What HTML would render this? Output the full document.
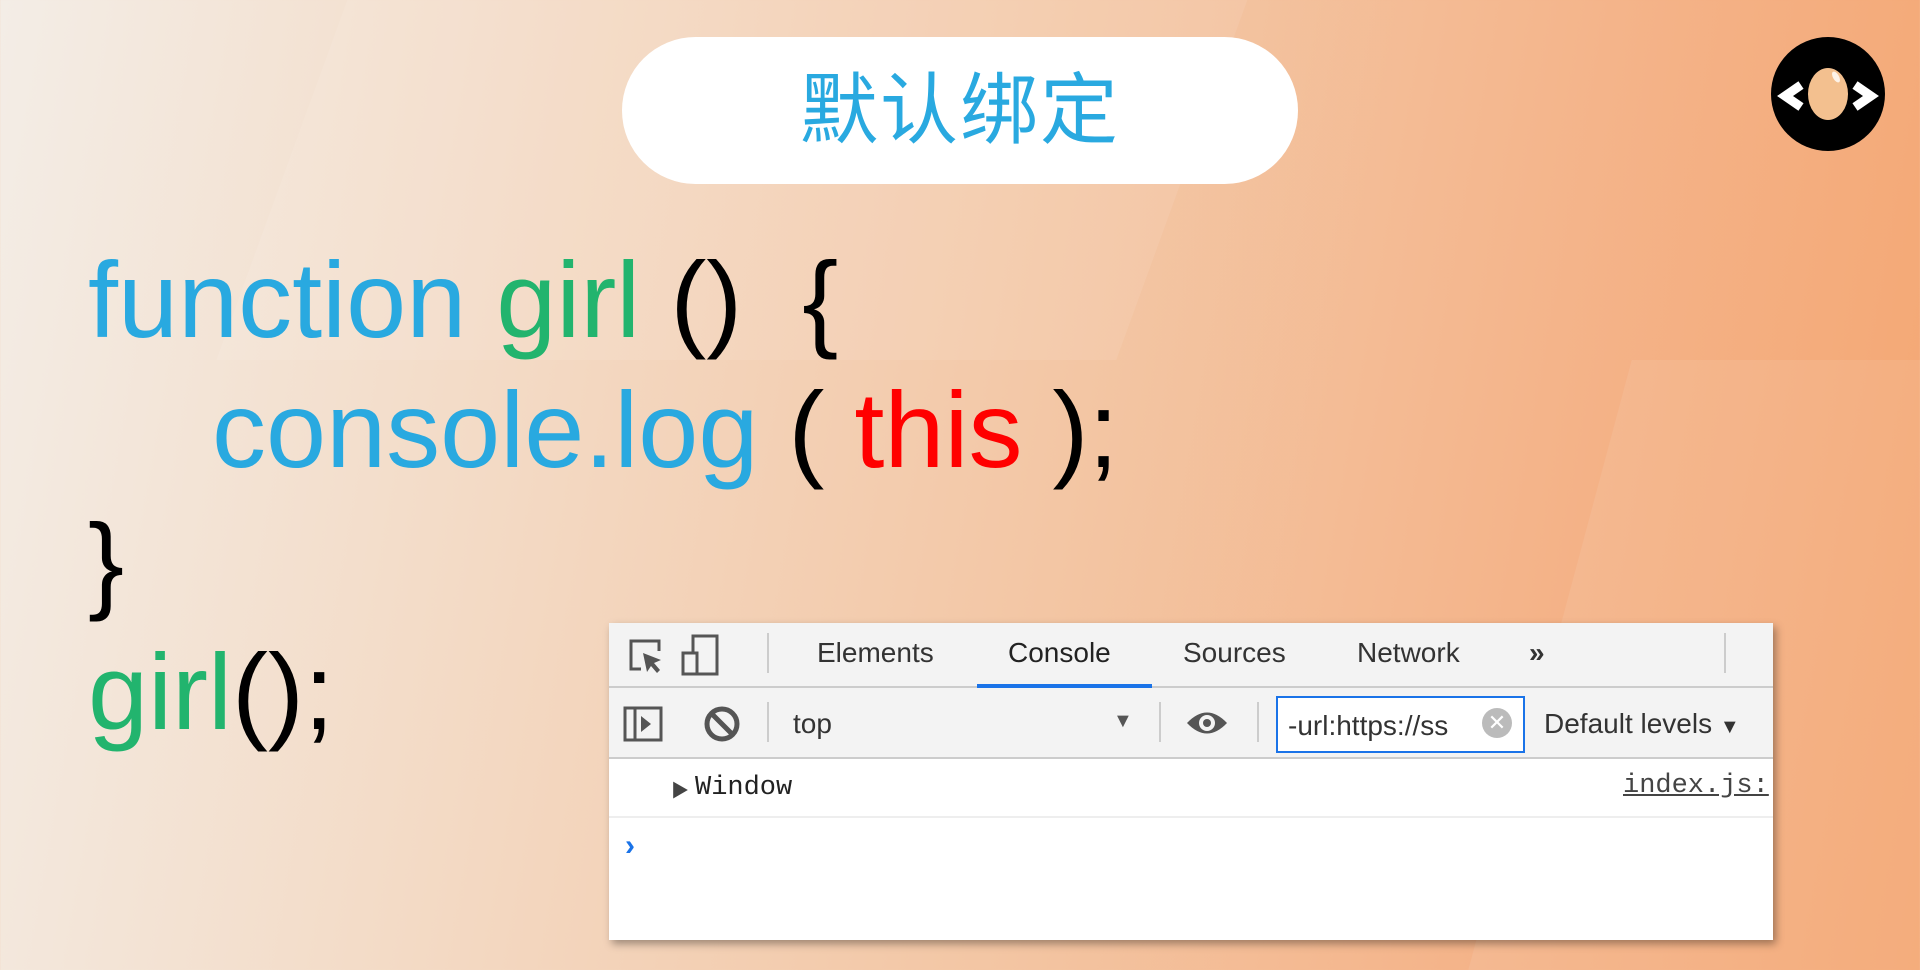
<!DOCTYPE html>
<html><head><meta charset="utf-8"><style>
*{margin:0;padding:0;box-sizing:border-box}
html,body{width:1920px;height:970px;overflow:hidden}
body{position:relative;
background:linear-gradient(100deg,#f3ede6 0%,#f3dcc8 25%,#f3c6a4 55%,#f4b287 80%,#f4a671 100%);
font-family:"Liberation Sans","Noto Sans CJK SC",sans-serif}
.shape{position:absolute;background:rgba(255,255,255,0.08)}
.pill{position:absolute;left:622px;top:37px;width:676px;height:147px;border-radius:74px;background:#fff;
color:#29a9e0;font-size:78px;text-align:center;line-height:147px;letter-spacing:2px}
.code{position:absolute;font-size:108px;line-height:1;white-space:pre}
.b{color:#29a9e0}.g{color:#22b46e}.r{color:#f00}.k{color:#000}
.dt{position:absolute;left:609px;top:623px;width:1164px;height:317px;background:#fff;box-shadow:3px 4px 8px rgba(0,0,0,.35);overflow:hidden;font-size:28px;color:#333}
.tabs{height:65px;background:#f3f3f3;border-bottom:2px solid #ccc;position:relative}
.tb{height:71px;background:#f3f3f3;border-bottom:2px solid #ccc;position:relative}
.t{position:absolute;top:14px}
.abs{position:absolute}
</style></head><body>
<div class="shape" style="left:300px;top:-100px;width:900px;height:460px;transform:skewX(-20deg)"></div>
<div class="shape" style="left:1550px;top:360px;width:500px;height:610px;transform:skewX(-15deg)"></div>
<div class="pill">默认绑定</div>
<svg class="abs" style="left:1771px;top:37px" width="114" height="114" viewBox="0 0 114 114">
<circle cx="57" cy="57" r="57" fill="#000"/>
<path d="M30 48 L14 59 L30 70" stroke="#fff" stroke-width="9" fill="none"/>
<path d="M84 48 L100 59 L84 70" stroke="#fff" stroke-width="9" fill="none"/>
<ellipse cx="57" cy="57" rx="20" ry="26" fill="#f3c08f"/>
<ellipse cx="65" cy="40" rx="3" ry="6" fill="#fff" opacity=".8" transform="rotate(-30 65 40)"/>
</svg>
<div class="code" style="left:88px;top:246px"><span class="b">function </span><span class="g">girl</span><span class="k"> ()  {</span></div>
<div class="code" style="left:212px;top:376px"><span class="b">console.log</span><span class="k"> ( </span><span class="r">this</span><span class="k"> );</span></div>
<div class="code k" style="left:88px;top:508px">}</div>
<div class="code" style="left:88px;top:638px"><span class="g">girl</span><span class="k">();</span></div>
<div class="dt">
 <div class="tabs">
  <svg class="abs" style="left:18px;top:14px" width="40" height="40" viewBox="0 0 40 40"><path d="M14 32H4V4h28v10" stroke="#555" stroke-width="3" fill="none"/><path d="M16 16l18 7-7 3 6 7-3 3-6-7-4 6z" fill="#555"/></svg>
  <svg class="abs" style="left:70px;top:10px" width="44" height="46" viewBox="0 0 44 46"><rect x="14" y="3" width="24" height="38" stroke="#555" stroke-width="3" fill="none"/><rect x="4" y="20" width="14" height="21" stroke="#555" stroke-width="3" fill="#f3f3f3"/></svg>
  <div class="abs" style="left:158px;top:10px;width:2px;height:40px;background:#ccc"></div>
  <div class="t" style="left:208px">Elements</div>
  <div class="t" style="left:399px;color:#222">Console</div>
  <div class="abs" style="left:368px;top:61px;width:175px;height:4px;background:#1a73e8"></div>
  <div class="t" style="left:574px">Sources</div>
  <div class="t" style="left:748px">Network</div>
  <div class="t" style="left:920px;font-weight:bold">»</div>
  <div class="abs" style="left:1115px;top:10px;width:2px;height:40px;background:#ccc"></div>
 </div>
 <div class="tb">
  <svg class="abs" style="left:14px;top:18px" width="40" height="36" viewBox="0 0 40 36"><rect x="2" y="2" width="36" height="32" stroke="#555" stroke-width="3" fill="none"/><path d="M12 2v32" stroke="#555" stroke-width="3"/><path d="M18 10l10 8-10 8z" fill="#555"/></svg>
  <svg class="abs" style="left:94px;top:17px" width="38" height="38" viewBox="0 0 38 38"><circle cx="19" cy="19" r="15" stroke="#555" stroke-width="5" fill="none"/><path d="M9 9l20 20" stroke="#555" stroke-width="5"/></svg>
  <div class="abs" style="left:158px;top:14px;width:2px;height:40px;background:#ccc"></div>
  <div class="t" style="left:184px;top:20px">top</div>
  <div class="abs" style="left:504px;top:22px;font-size:20px;color:#555">▼</div>
  <div class="abs" style="left:550px;top:14px;width:2px;height:40px;background:#ccc"></div>
  <svg class="abs" style="left:576px;top:20px" width="44" height="30" viewBox="0 0 44 30"><path d="M2 15Q22-6 42 15Q22 36 2 15z" fill="#555"/><circle cx="22" cy="15" r="8" fill="#f3f3f3"/><circle cx="22" cy="15" r="4" fill="#555"/></svg>
  <div class="abs" style="left:648px;top:14px;width:2px;height:40px;background:#ccc"></div>
  <div class="abs" style="left:667px;top:8px;width:249px;height:57px;border:2px solid #1a73e8;background:#fff;overflow:hidden">
   <div class="abs" style="left:10px;top:12px;white-space:nowrap">-url:https://ss</div>
   <div class="abs" style="left:204px;top:10px;width:30px;height:30px;border-radius:50%;background:#bbb;color:#fff;font-size:22px;text-align:center;line-height:30px">✕</div>
  </div>
  <div class="t" style="left:935px;top:20px;white-space:nowrap">Default levels <span style="font-size:20px">▼</span></div>
 </div>
 <div style="height:59px;border-bottom:2px solid #eee;position:relative">
  <div class="abs" style="left:62px;top:18px;font-size:18px;color:#444">▶</div>
  <div class="abs" style="left:86px;top:14px;font-family:'Liberation Mono',monospace;font-size:27px;color:#222">Window</div>
  <div class="abs" style="left:1014px;top:12px;font-family:'Liberation Mono',monospace;font-size:27px;color:#444;text-decoration:underline;white-space:nowrap">index.js:</div>
 </div>
 <div class="abs" style="left:16px;top:206px;color:#1a73e8;font-size:30px;font-weight:bold">›</div>
</div>
</body></html>
